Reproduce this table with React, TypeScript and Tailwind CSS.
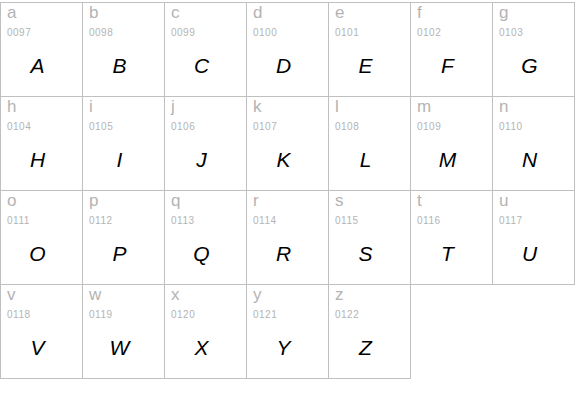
const letters = "abcdefghijklmnopqrstuvwxyz".split("");

function Cell({ ch, idx }: { ch: string; idx: number }) {
  const firstRow = idx < 7;
  const firstCol = idx % 7 === 0;
  return (
    <div
      className={
        "flex h-[94px] flex-col border-b border-r border-[#c0c0c0] px-[6px]" +
        (firstRow ? " h-[95px] border-t" : "") +
        (firstCol ? " border-l" : "")
      }
    >
      <div className="mt-[1px] h-[18px] text-[17px] leading-[18px] text-[#b4b4b4]">{ch}</div>
      <div className="mt-[6px] text-[10px] leading-[10px] tracking-[0.5px] text-[#b4b4b4]">
        {String(ch.charCodeAt(0)).padStart(4, "0")}
      </div>
      <div className="mt-[17px] pr-[8px] text-center text-[21px] leading-[22px] italic text-black">
        {ch.toUpperCase()}
      </div>
    </div>
  );
}

export default function App() {
  return (
    <div className="h-[414px] w-[575px] bg-white font-['Liberation_Sans',Arial,sans-serif]">
      <div className="grid grid-cols-[83px_repeat(6,82px)] pt-[2px]">
        {letters.map((ch, i) => (
          <Cell key={ch} ch={ch} idx={i} />
        ))}
      </div>
    </div>
  );
}
